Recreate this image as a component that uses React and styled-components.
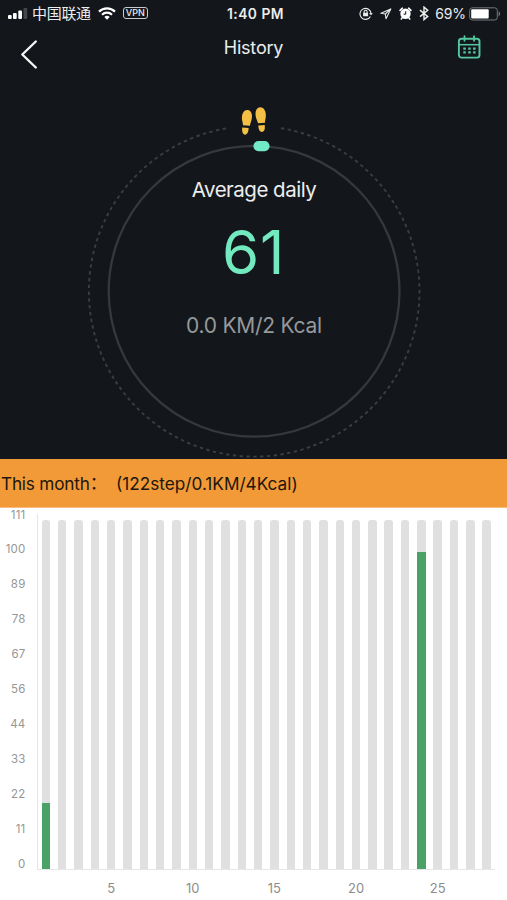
import React from "react";
import styled, { createGlobalStyle } from "styled-components";

const GlobalStyle = createGlobalStyle`
  * { box-sizing: border-box; }
  body {
    margin: 0;
    background: #fff;
    font-family: Inter, "Noto Sans CJK SC", sans-serif;
  }
`;

const Screen = styled.main`
  width: 507px;
  height: 900px;
  overflow: hidden;
  display: flex;
  flex-direction: column;
  background: #fff;
`;

const Hero = styled.section`
  height: 459px;
  flex: none;
  background: #13171c;
  color: #eceded;
`;

const StatusBar = styled.div`
  height: 27px;
  display: grid;
  grid-template-columns: 1fr auto 1fr;
  align-items: center;
  padding: 0 6px 0 8px;
`;

const StatusGroup = styled.div`
  display: flex;
  align-items: center;
  justify-content: ${(p) => (p.$end ? "flex-end" : "flex-start")};
  svg { flex: none; display: block; }
`;

const StatusIcons = styled.div`
  display: flex;
  align-items: center;
  gap: 7px;
`;

const Carrier = styled.span`
  font: 400 15px/20px "Noto Sans CJK SC", sans-serif;
  letter-spacing: -0.3px;
  margin: -2px 7px 0 4px;
`;

const Clock = styled.span`
  font-size: 13.8px;
  font-weight: 600;
  letter-spacing: 0.5px;
  white-space: nowrap;
  padding-left: 2px;
`;

const Percent = styled.span`
  font-size: 14px;
  letter-spacing: -0.1px;
  margin: 0 3px 0 6px;
`;

const VpnBadge = styled.span`
  width: 25px;
  height: 12px;
  margin: -1px 0 0 7px;
  border: 1px solid #c9cbcc;
  border-radius: 3px;
  font-size: 9px;
  font-weight: 500;
  line-height: 10px;
  text-align: center;
`;

const NavBar = styled.header`
  height: 55px;
  display: grid;
  grid-template-columns: 60px 1fr 60px;
  align-items: start;
  svg { display: block; }
`;

const BackButton = styled.button`
  border: 0;
  background: none;
  padding: 12px 0 0 19px;
`;

const CalendarButton = styled.button`
  border: 0;
  background: none;
  padding: 8px 0 0 10px;
`;

const Title = styled.h1`
  margin: 9px 0 0;
  font-size: 18px;
  font-weight: 400;
  letter-spacing: -0.2px;
  line-height: 23px;
  text-align: center;
`;

const Gauge = styled.div`
  height: 377px;
  display: grid;
  > * { grid-area: 1 / 1; }
`;

const GaugeText = styled.div`
  display: flex;
  flex-direction: column;
  align-items: center;
  padding: 94px 0 0 1px;
`;

const Label = styled.div`
  font-size: 20.5px;
  letter-spacing: -0.5px;
  line-height: 28px;
  color: #eceded;
`;

const Value = styled.div`
  margin: 15px 1px 0 0;
  font-size: 60px;
  letter-spacing: 0.6px;
  line-height: 66px;
  color: #73e9bf;
`;

const Detail = styled.div`
  margin-top: 27px;
  font-size: 21px;
  letter-spacing: -0.25px;
  line-height: 28px;
  color: #96999b;
`;

const Summary = styled.div`
  height: 49px;
  flex: none;
  display: flex;
  align-items: center;
  padding: 2px 0 0 1px;
  border-bottom: 1px solid #f6bd7e;
  background: #f29a38;
  color: #21170c;
  font-size: 17.2px;
  line-height: 26px;
  white-space: pre;
`;

const SummaryName = styled.span`
  width: 115px;
  display: flex;
  letter-spacing: -0.2px;
`;

const Colon = styled.span`
  margin-top: -1px;
`;

const ChartArea = styled.section`
  flex: 1;
  display: grid;
  grid-template-columns: 37px 458px;
  grid-template-rows: 362px 30px;
`;

const YAxis = styled.div`
  display: flex;
  flex-direction: column;
  align-items: flex-end;
  padding: 0.5px 11.5px 0 0;
  color: #969696;
  font-size: 11.5px;
  letter-spacing: 0.2px;
`;

const YTick = styled.span`
  flex: none;
  height: 34.95px;
  line-height: 13px;
`;

const Plot = styled.div`
  margin-top: 6px;
  display: flex;
  justify-content: space-between;
  padding: 6px 4px 0 3.6px;
  border-left: 1px solid #e6e6e6;
  border-bottom: 1px solid #e6e6e6;
`;

const Track = styled.div`
  width: 8.4px;
  display: flex;
  align-items: flex-end;
  border-radius: 3px 3px 0 0;
  background: #e0e0e0;
`;

const Bar = styled.div`
  width: 100%;
  height: ${(p) => p.$height}px;
  background: #4ba267;
`;

const XAxis = styled.div`
  grid-column: 2;
  display: flex;
  padding: 10px 0 0 33.3px;
  color: #8c8c8c;
  font-size: 13px;
  line-height: 16px;
`;

const XTick = styled.span`
  width: 81.65px;
  flex: none;
  text-align: center;
`;

const SignalIcon = () => (
  <svg width="20" height="13" viewBox="0 0 20 13" fill="#fff">
    <rect x="0" y="8" width="3.7" height="4" rx="1" />
    <rect x="5" y="6" width="3.7" height="6" rx="1" />
    <rect x="10.3" y="3.5" width="3.7" height="8.5" rx="1" />
    <rect x="15.5" y="1" width="3.7" height="11" rx="1" fill="#44484c" />
  </svg>
);

const WifiIcon = () => (
  <svg width="18" height="13" viewBox="0 0 18 13" fill="none" stroke="#fff" strokeWidth="2.2">
    <path d="M1 4.6a11.5 11.5 0 0 1 16 0" />
    <path d="M4 7.7a7.2 7.2 0 0 1 10 0" />
    <path d="M6.3 9.9a4 4 0 0 1 5.4 0L9 12.7Z" fill="#fff" stroke="none" />
  </svg>
);

const LockIcon = () => (
  <svg width="14" height="13" viewBox="0 0 14 13" fill="none" stroke="#e9eaea" strokeWidth="1.1">
    <path d="M11.4 9.4A5.5 5.5 0 1 1 12 6.8" />
    <path d="m10 6.3 2.1 2 1.7-2.2Z" fill="#e9eaea" stroke="none" />
    <rect x="4.1" y="5.7" width="5" height="3.6" rx=".4" fill="#e9eaea" stroke="none" />
    <path d="M5.1 6V4.7a1.5 1.5 0 0 1 3 0V6" />
  </svg>
);

const LocationIcon = () => (
  <svg width="12" height="12" viewBox="0 0 12 12" fill="none" stroke="#e9eaea" strokeWidth="1.1" strokeLinejoin="round">
    <path d="M10.8 1 .9 5.3l4.4.7.7 4.7Z" />
    <path d="M10.8 1 5.3 6" />
  </svg>
);

const AlarmIcon = () => (
  <svg width="13" height="13" viewBox="0 0 13 13">
    <circle cx="6.5" cy="6.8" r="5.2" fill="#fff" />
    <path d="M1.1 3.4 3.4 1.2M9.6 1.2l2.3 2.2M3 11l-.7 1M10 11l.7 1" stroke="#fff" strokeWidth="1.6" strokeLinecap="round" />
    <path d="M6.7 4.2v3H4.6" fill="none" stroke="#13171c" strokeWidth="1" />
  </svg>
);

const BluetoothIcon = () => (
  <svg width="10" height="15" viewBox="0 0 10 15" fill="none" stroke="#f1f1f1" strokeWidth="1.4">
    <path d="m1 4.1 7.7 6.3L5 13.6V1.1l3.7 3.2L1 10.6" />
  </svg>
);

const BatteryIcon = () => (
  <svg width="32" height="14" viewBox="0 0 32 14">
    <rect x=".7" y=".8" width="27.6" height="12.2" rx="2.6" fill="none" stroke="#74777a" strokeWidth="1" />
    <rect x="2.2" y="2.3" width="17.5" height="9.2" rx="1" fill="#fff" />
    <path d="M29.6 4.6c2 .6 2 4 0 4.6Z" fill="#74777a" />
  </svg>
);

const BackIcon = () => (
  <svg width="20" height="32" viewBox="0 0 20 32" fill="none" stroke="#f5f5f5" strokeWidth="2.4" strokeLinecap="round" strokeLinejoin="round">
    <path d="M16.8 2.5 3.3 15.5l13.5 13" />
  </svg>
);

const CalendarIcon = () => (
  <svg width="24" height="25" viewBox="0 0 24 25" fill="none" stroke="#55c79f">
    <rect x="1.9" y="3.7" width="20.6" height="18.9" rx="2.6" strokeWidth="1.9" />
    <path d="M1.9 9.7h20.6" strokeWidth="1.5" />
    <path d="M7.5 1.2v4.6M17 1.2v4.6" strokeWidth="1.8" strokeLinecap="round" />
    <path d="M6.3 13.6h12.4M6.3 17.4h12.4" strokeWidth="2.3" strokeDasharray="2.5 2.4" />
  </svg>
);

/* The view box starts at the gauge's top edge, 82px below the top of the screen. */
const GaugeRings = () => (
  <svg width="507" height="377" viewBox="0 82 507 377" fill="none">
    <path
      d="M281 128.2A165.3 165.3 0 1 1 227.4 128.2"
      stroke="#3a3e42"
      strokeWidth="1.9"
      strokeDasharray="3.4 3.4"
    />
    <circle cx="254.1" cy="291.3" r="145.4" stroke="#35393d" strokeWidth="2.3" />
    <rect x="253.4" y="141" width="16.2" height="10.2" rx="5.1" fill="#73eac6" />
    <g fill="#f3bf45">
      <path d="M247.2 110c3 0 4.8 2.7 4.8 6.2 0 3.8-1.5 6-2.1 9.6l-6.9-.5c-.2-3-1.2-4.9-1.1-7.7.2-4.4 2.1-7.6 5.3-7.6Z" />
      <path d="m242.2 127.6 6.4.5c0 3.9-1.3 6.6-3.5 6.6-2.4 0-3.3-3.2-2.9-7.1Z" />
      <path d="M260.2 107.3c3.3 0 5.2 2.8 5.6 6.8.4 3-.7 5.5-.9 8.7l-6.9.5c-.8-3.2-2.4-5.5-2.5-9.1 0-3.8 1.7-6.9 4.7-6.9Z" />
      <path d="m258.3 125.5 6.4-.5c.6 3.9-.3 6.9-2.7 6.9-2.2 0-3.5-2.5-3.7-6.4Z" />
    </g>
  </svg>
);

const yTicks = [111, 100, 89, 78, 67, 56, 44, 33, 22, 11, 0];
const xTicks = [5, 10, 15, 20, 25];
const barHeights = { 1: 66, 24: 317.5 };
const days = Array.from({ length: 28 }, (_, i) => i + 1);

export default function App() {
  return (
    <Screen>
      <GlobalStyle />
      <Hero>
        <StatusBar>
          <StatusGroup>
            <SignalIcon />
            <Carrier>中国联通</Carrier>
            <WifiIcon />
            <VpnBadge>VPN</VpnBadge>
          </StatusGroup>
          <Clock>1:40 PM</Clock>
          <StatusGroup $end>
            <StatusIcons>
              <LockIcon />
              <LocationIcon />
              <AlarmIcon />
              <BluetoothIcon />
            </StatusIcons>
            <Percent>69%</Percent>
            <BatteryIcon />
          </StatusGroup>
        </StatusBar>
        <NavBar>
          <BackButton aria-label="Back"><BackIcon /></BackButton>
          <Title>History</Title>
          <CalendarButton aria-label="Calendar"><CalendarIcon /></CalendarButton>
        </NavBar>
        <Gauge>
          <GaugeRings />
          <GaugeText>
            <Label>Average daily</Label>
            <Value>61</Value>
            <Detail>0.0 KM/2 Kcal</Detail>
          </GaugeText>
        </Gauge>
      </Hero>
      <Summary>
        <SummaryName>This month<Colon>：</Colon></SummaryName>
        <span>(122step/0.1KM/4Kcal)</span>
      </Summary>
      <ChartArea>
        <YAxis>
          {yTicks.map((t) => <YTick key={t}>{t}</YTick>)}
        </YAxis>
        <Plot>
          {days.map((d) => (
            <Track key={d}>{barHeights[d] && <Bar $height={barHeights[d]} />}</Track>
          ))}
        </Plot>
        <XAxis>
          {xTicks.map((t) => <XTick key={t}>{t}</XTick>)}
        </XAxis>
      </ChartArea>
    </Screen>
  );
}
